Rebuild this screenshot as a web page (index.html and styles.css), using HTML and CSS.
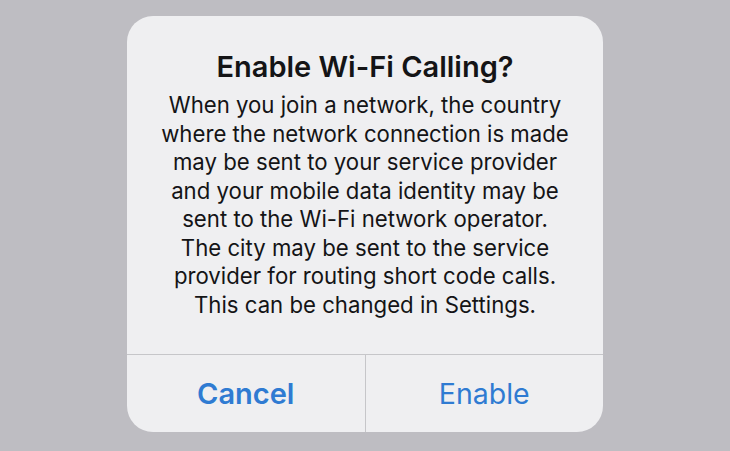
FILE: index.html
```html
<!DOCTYPE html>
<html lang="en">
<head>
<meta charset="utf-8">
<title>Enable Wi-Fi Calling?</title>
<link rel="stylesheet" href="styles.css">
</head>
<body>
<div class="screen">
  <div class="alert" role="alertdialog" aria-labelledby="alert-title">
    <div class="alert-content">
      <h1 class="alert-title" id="alert-title">Enable Wi-Fi Calling?</h1>
      <p class="alert-message">When you join a network, the country<br>where the network connection is made<br>may be sent to your service provider<br>and your mobile data identity may be<br>sent to the Wi-Fi network operator.<br>The city may be sent to the service<br>provider for routing short code calls.<br>This can be changed in Settings.</p>
    </div>
    <div class="alert-actions">
      <button class="alert-button alert-button-cancel">Cancel</button>
      <button class="alert-button">Enable</button>
    </div>
  </div>
</div>
</body>
</html>
```
FILE: styles.css
```css
html, body {
  margin: 0;
  padding: 0;
}

body {
  background: #bebdc2;
  font-family: Inter, "Noto Sans", "Liberation Sans", sans-serif;
  -webkit-font-smoothing: antialiased;
}

.screen {
  width: 730px;
  height: 451px;
  display: flex;
  justify-content: center;
  padding-top: 16px;
  box-sizing: border-box;
}

.alert {
  width: 476px;
  height: 416px;
  background: #efeff1;
  border-radius: 26px;
  display: flex;
  flex-direction: column;
  overflow: hidden;
}

.alert-content {
  flex: 1;
  display: flex;
  flex-direction: column;
  align-items: center;
  padding-top: 34px;
  text-align: center;
  color: #141416;
}

.alert-title {
  margin: 0;
  font-size: 29px;
  font-weight: 600;
  line-height: 34px;
  letter-spacing: 0;
}

.alert-message {
  margin: 7px 0 0;
  font-size: 22.2px;
  line-height: 28.5px;
  font-weight: 400;
}

.alert-actions {
  height: 77px;
  display: flex;
  border-top: 1px solid #c6c6c9;
}

.alert-button {
  flex: 1;
  border: 0;
  background: transparent;
  font-family: inherit;
  font-size: 28.5px;
  color: #2f7bd2;
  font-weight: 400;
  padding: 0;
  cursor: pointer;
}

.alert-button + .alert-button {
  border-left: 1px solid #c6c6c9;
}

.alert-button-cancel {
  font-weight: 600;
  font-size: 29px;
}
```
